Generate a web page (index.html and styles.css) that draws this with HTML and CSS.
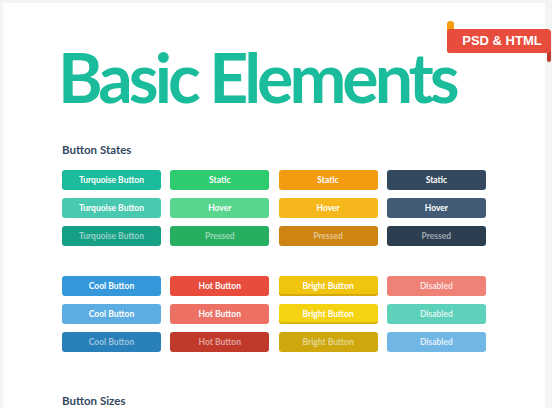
FILE: index.html
```html
<!DOCTYPE html>
<html>
<head>
<meta charset="utf-8">
<link rel="stylesheet" href="styles.css">
</head>
<body>
<div class="card">
  <div class="ribbon">
    <span class="ribbon-tab"></span>
    <span class="ribbon-fold"></span>
    <span class="ribbon-label">PSD &amp; HTML</span>
  </div>
  <h1 class="title">Basic Elements</h1>

  <h2 class="section-title">Button States</h2>
  <div class="grid">
    <div class="btn turq">Turquoise Button</div>
    <div class="btn green">Static</div>
    <div class="btn orange">Static</div>
    <div class="btn navy">Static</div>

    <div class="btn turq-h">Turquoise Button</div>
    <div class="btn green-h">Hover</div>
    <div class="btn orange-h">Hover</div>
    <div class="btn navy-h">Hover</div>

    <div class="btn turq-p pressed">Turquoise Button</div>
    <div class="btn green-p pressed">Pressed</div>
    <div class="btn orange-p pressed">Pressed</div>
    <div class="btn navy-p pressed">Pressed</div>
  </div>

  <div class="grid second">
    <div class="btn cool">Cool Button</div>
    <div class="btn hot">Hot Button</div>
    <div class="btn bright">Bright Button</div>
    <div class="btn dis-red disabled">Disabled</div>

    <div class="btn cool-h">Cool Button</div>
    <div class="btn hot-h">Hot Button</div>
    <div class="btn bright-h">Bright Button</div>
    <div class="btn dis-turq disabled">Disabled</div>

    <div class="btn cool-p pressed">Cool Button</div>
    <div class="btn hot-p pressed">Hot Button</div>
    <div class="btn bright-p pressed">Bright Button</div>
    <div class="btn dis-blue disabled">Disabled</div>
  </div>

  <h2 class="section-title sizes">Button Sizes</h2>
</div>
</body>
</html>
```

FILE: styles.css
```css
html, body {
  margin: 0;
  padding: 0;
  height: 408px;
  overflow: hidden;
}
body {
  background: #f3f5f5;
  padding: 3px 7px 0 3px;
  box-sizing: border-box;
  font-family: Lato, "Noto Sans", sans-serif;
}
.card {
  position: relative;
  background: #ffffff;
  height: 405px;
  padding: 39px 0 0 59px;
  box-sizing: border-box;
}
.title {
  margin: 0 0 0 -4px;
  font-family: Lato, sans-serif;
  font-weight: 700;
  font-size: 68px;
  line-height: 70px;
  color: #1abc9c;
  letter-spacing: -4px;
  white-space: nowrap;
}
.section-title {
  margin: 31px 0 0 0;
  font-size: 11.5px;
  line-height: 14px;
  font-weight: 700;
  color: #34495e;
}
.sizes {
  margin-top: 42px;
}
.grid {
  display: grid;
  grid-template-columns: repeat(4, 99px);
  column-gap: 9.3px;
  row-gap: 8px;
  margin-top: 13px;
}
.second {
  margin-top: 30px;
}
.btn {
  height: 20px;
  border-radius: 3px;
  color: #ffffff;
  font-size: 8.5px;
  font-weight: 700;
  line-height: 20px;
  text-align: center;
}
.pressed { color: rgba(255,255,255,0.55); }
.disabled { color: rgba(255,255,255,0.8); }

.turq { background: #1abc9c; }
.turq-h { background: #48c9b0; }
.turq-p { background: #16a085; }
.green { background: #2ecc71; }
.green-h { background: #58d68d; }
.green-p { background: #27ae60; }
.orange { background: #f39c12; }
.orange-h { background: #f5b71b; }
.orange-p { background: #cd8410; }
.navy { background: #34495e; }
.navy-h { background: #415b76; }
.navy-p { background: #2c3e50; }

.cool { background: #3498db; }
.cool-h { background: #5dade2; }
.cool-p { background: #2980b9; }
.hot { background: #e74c3c; }
.hot-h { background: #ec7063; }
.hot-p { background: #c0392b; }
.bright { background: #f1c40f; box-shadow: inset 0 -2px 0 #d4a90d; }
.bright-h { background: #f4d313; box-shadow: inset 0 -2px 0 #d9b50c; }
.bright-p { background: #cda70d; }
.dis-red { background: #ef8176; }
.dis-turq { background: #5ed1ba; }
.dis-blue { background: #71b7e6; }

.ribbon {
  position: absolute;
  top: 26px;
  right: -6px;
  width: 104px;
  height: 24px;
}
.ribbon-tab {
  position: absolute;
  left: 0;
  top: -8px;
  width: 7px;
  height: 32px;
  background: #f39c12;
  border-radius: 3px 3px 2px 2px;
}
.ribbon-fold {
  position: absolute;
  right: 0;
  top: 20px;
  width: 4px;
  height: 13px;
  background: #c0392b;
  border-radius: 0 0 2px 2px;
}
.ribbon-label {
  position: absolute;
  left: 0;
  top: 0;
  width: 104px;
  height: 24px;
  box-sizing: border-box;
  padding-left: 6px;
  background: #e74c3c;
  border-radius: 3px 4px 3px 3px;
  color: #ffffff;
  font-family: "Liberation Sans", Arial, sans-serif;
  font-weight: 700;
  font-size: 13px;
  line-height: 24px;
  text-align: center;
}
```
